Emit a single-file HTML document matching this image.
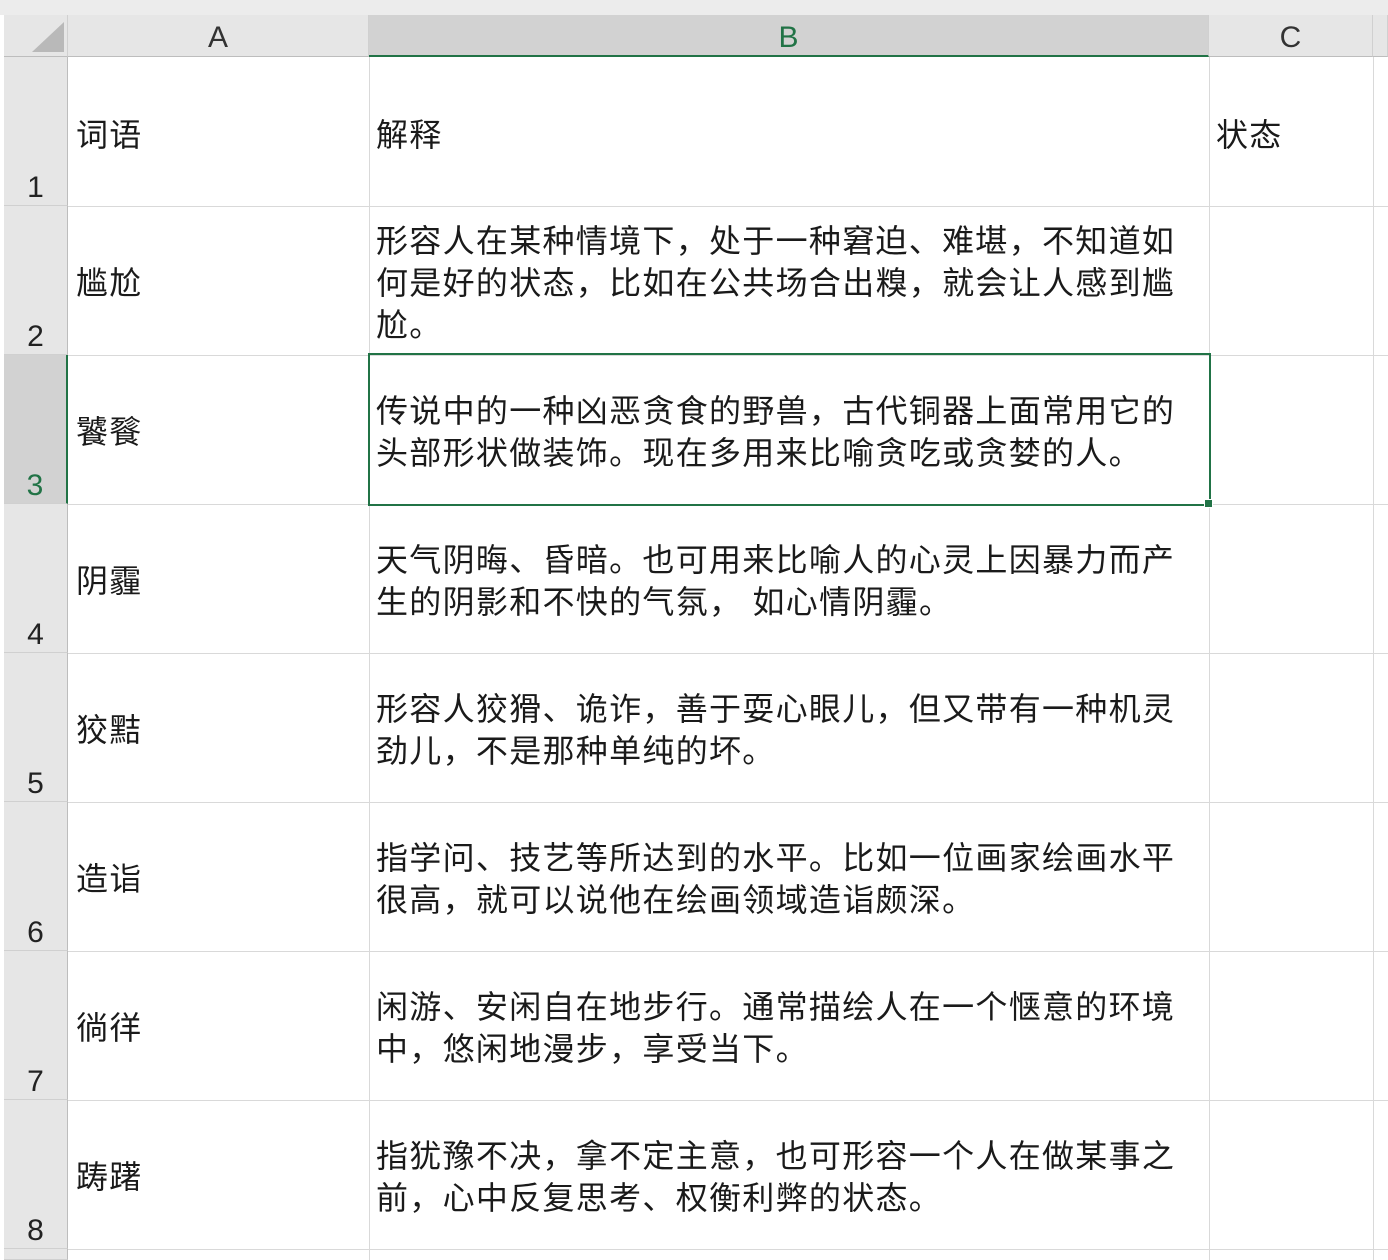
<!DOCTYPE html>
<html><head><meta charset="utf-8"><style>
html,body{margin:0;padding:0;background:#fff;width:1388px;height:1260px;overflow:hidden;}
body{position:relative;font-family:"Liberation Sans","Noto Sans CJK SC",sans-serif;color:#222;}
.abs{position:absolute;box-sizing:border-box;}
.top{left:0;top:0;width:1388px;height:15px;background:#ececec;}
.hdr{top:15px;height:42px;background:#e6e6e6;border-bottom:1px solid #bdbdbd;border-right:1px solid #d0d0d0;font-size:30px;text-align:center;line-height:46px;color:#333;}
.rh{left:4px;width:64px;height:149px;background:#e6e6e6;border-bottom:1px solid #d0d0d0;border-right:1px solid #bdbdbd;font-size:30px;text-align:center;}
.rh span{position:absolute;left:0;right:0;bottom:0px;}
.hl{left:68px;width:1320px;height:1px;background:#d9d9d9;}
.vl{top:57px;width:1px;height:1203px;background:#d9d9d9;}
.cell{display:flex;align-items:center;height:149px;font-size:32px;letter-spacing:1.3px;line-height:42px;white-space:nowrap;color:#1a1a1a;}
</style></head><body>
<div class="abs top"></div>
<div class="abs hdr" style="left:4px;width:64px;"></div>
<svg class="abs" style="left:30px;top:20px" width="36" height="34"><polygon points="34,2 34,32 2,32" fill="#b9b9b9"/></svg>
<div class="abs hdr" style="left:68px;width:301px;">A</div>
<div class="abs hdr" style="left:369px;width:840px;background:#d2d2d2;border-bottom:2px solid #217346;color:#217346;">B</div>
<div class="abs hdr" style="left:1209px;width:164px;">C</div>
<div class="abs hdr" style="left:1373px;width:15px;"></div>

<div class="abs vl" style="left:369px"></div>
<div class="abs vl" style="left:1209px"></div>
<div class="abs vl" style="left:1373px"></div>
<div class="abs hl" style="top:206px"></div>
<div class="abs hl" style="top:355px"></div>
<div class="abs hl" style="top:504px"></div>
<div class="abs hl" style="top:653px"></div>
<div class="abs hl" style="top:802px"></div>
<div class="abs hl" style="top:951px"></div>
<div class="abs hl" style="top:1100px"></div>
<div class="abs hl" style="top:1249px"></div>

<div class="abs rh" style="top:57px"><span>1</span></div>
<div class="abs rh" style="top:206px"><span>2</span></div>
<div class="abs rh" style="top:355px;background:#d2d2d2;border-right:2px solid #217346;color:#217346;"><span>3</span></div>
<div class="abs rh" style="top:504px"><span>4</span></div>
<div class="abs rh" style="top:653px"><span>5</span></div>
<div class="abs rh" style="top:802px"><span>6</span></div>
<div class="abs rh" style="top:951px"><span>7</span></div>
<div class="abs rh" style="top:1100px"><span>8</span></div>
<div class="abs rh" style="top:1249px;height:11px"></div>

<div class="abs cell" style="left:76px;top:60px">词语</div>
<div class="abs cell" style="left:376px;top:60px">解释</div>
<div class="abs cell" style="left:1216px;top:60px">状态</div>

<div class="abs cell" style="left:76px;top:208px">尴尬</div>
<div class="abs cell" style="left:376px;top:208px">形容人在某种情境下，处于一种窘迫、难堪，不知道如<br>何是好的状态，比如在公共场合出糗，就会让人感到尴<br>尬。</div>

<div class="abs cell" style="left:76px;top:357px">饕餮</div>
<div class="abs cell" style="left:376px;top:357px">传说中的一种凶恶贪食的野兽，古代铜器上面常用它的<br>头部形状做装饰。现在多用来比喻贪吃或贪婪的人。</div>

<div class="abs cell" style="left:76px;top:506px">阴霾</div>
<div class="abs cell" style="left:376px;top:506px">天气阴晦、昏暗。也可用来比喻人的心灵上因暴力而产<br>生的阴影和不快的气氛， 如心情阴霾。</div>

<div class="abs cell" style="left:76px;top:655px">狡黠</div>
<div class="abs cell" style="left:376px;top:655px">形容人狡猾、诡诈，善于耍心眼儿，但又带有一种机灵<br>劲儿，不是那种单纯的坏。</div>

<div class="abs cell" style="left:76px;top:804px">造诣</div>
<div class="abs cell" style="left:376px;top:804px">指学问、技艺等所达到的水平。比如一位画家绘画水平<br>很高，就可以说他在绘画领域造诣颇深。</div>

<div class="abs cell" style="left:76px;top:953px">徜徉</div>
<div class="abs cell" style="left:376px;top:953px">闲游、安闲自在地步行。通常描绘人在一个惬意的环境<br>中，悠闲地漫步，享受当下。</div>

<div class="abs cell" style="left:76px;top:1102px">踌躇</div>
<div class="abs cell" style="left:376px;top:1102px">指犹豫不决，拿不定主意，也可形容一个人在做某事之<br>前，心中反复思考、权衡利弊的状态。</div>

<div class="abs" style="left:368px;top:353px;width:843px;height:153px;border:2px solid #217346;"></div>
<div class="abs" style="left:1204px;top:499px;width:9px;height:9px;background:#217346;border:1px solid #fff;"></div>
</body></html>
